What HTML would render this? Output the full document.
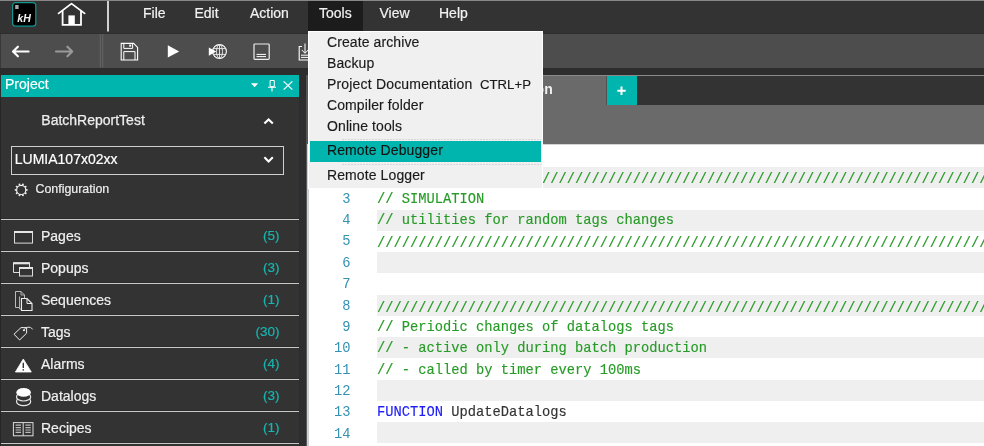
<!DOCTYPE html>
<html><head><meta charset="utf-8">
<style>
*{margin:0;padding:0;box-sizing:border-box}
html,body{width:984px;height:446px;overflow:hidden;background:#2d2d2d;will-change:transform;font-family:"Liberation Sans",sans-serif}
.a{position:absolute;white-space:nowrap}
.t{position:absolute;white-space:nowrap;line-height:1}
#top{left:0;top:0;width:984px;height:33px;background:#333;border-top:1px solid #888}
#tb{left:0;top:34px;width:984px;height:34px;background:#4d4d4d}
.mb{font-size:14px;color:#f2f2f2;-webkit-text-stroke:0.2px #f2f2f2}
#side{left:0;top:97px;width:299px;height:349px;background:#333}
#phd{left:1px;top:75px;width:298px;height:22px;background:#00b5ad}
.sep{position:absolute;left:1px;width:298px;height:2px;background:#c8c8c8;border-top:1px solid #2c2c2c}
.lbl{font-size:14px;color:#f0f0f0;-webkit-text-stroke:0.2px #f0f0f0}
.cnt{font-size:13.5px;color:#19b5ae;-webkit-text-stroke:0.2px #19b5ae}
#gut{left:300px;top:97px;width:6px;height:349px;background:#2e2e30}
#edge{left:306px;top:144px;width:3px;height:302px;background:linear-gradient(90deg,#5a5c5e 0 1px,#cdd0d3 1px 3px)}
#tabs{left:308px;top:75px;width:676px;height:30px;background:#333;border-top:1px solid #8a8a8a}
#tab1{left:308px;top:76px;width:298px;height:29px;background:#6a6a6a}
#plus{left:607px;top:76px;width:30px;height:29px;background:#00b5ad}
#hdr{left:308px;top:105px;width:676px;height:39px;background:#6a6a6a}
#ed{left:308px;top:144px;width:676px;height:302px;background:#fff}
.ln{position:absolute;left:308px;width:42.5px;padding-top:2px;text-align:right;font-family:"Liberation Mono",monospace;font-size:13.75px;color:#3592b2;line-height:21.25px;height:21.25px}
.cl{position:absolute;left:377px;width:607px;padding-top:2px;font-family:"Liberation Mono",monospace;font-size:13.75px;color:#279b27;-webkit-text-stroke-width:0.15px;line-height:21.25px;height:21.25px;overflow:hidden}
.ev{background:#efefef}
.sl{display:inline-block;transform:translateY(1.3px) scaleY(1.12);transform-origin:50% 9px}
#menu{left:308px;top:31px;width:235px;height:158px;background:#f0f0f0;border:1px solid #fff}
.mi{font-size:14px;letter-spacing:0.1px;color:#1a1a1a;-webkit-text-stroke:0.15px #1a1a1a}
.dsep{position:absolute;left:342px;width:199px;height:1px;background:repeating-linear-gradient(90deg,#d6d6d6 0 2px,transparent 2px 3px)}
</style></head><body>
<div class="a" id="top"></div>
<div class="a" style="left:308px;top:1px;width:55px;height:30px;background:#1c1c1c"></div>
<div class="a" id="tb"></div><div class="a" style="left:0;top:34px;width:1px;height:34px;background:#383838"></div>

<!-- menubar text -->
<div class="t mb" style="left:143px;top:5.8px">File</div>
<div class="t mb" style="left:194.5px;top:5.8px">Edit</div>
<div class="t mb" style="left:250px;top:5.8px">Action</div>
<div class="t mb" style="left:319px;top:5.8px">Tools</div>
<div class="t mb" style="left:379.5px;top:5.8px">View</div>
<div class="t mb" style="left:439px;top:5.8px">Help</div>

<!-- sidebar -->
<div class="a" id="side"></div>
<div class="a" id="phd"></div>
<div class="t" style="left:5px;top:77px;font-size:14px;color:#fff;-webkit-text-stroke:0.2px #fff">Project</div>
<div class="t" style="left:41.3px;top:113.3px;font-size:14px;color:#eee;-webkit-text-stroke:0.25px #eee">BatchReportTest</div>
<div class="a" style="left:11px;top:146px;width:273px;height:29px;border:1px solid #cfcfcf"></div>
<div class="t" style="left:14.8px;top:151.6px;font-size:14px;color:#fff;-webkit-text-stroke:0.2px #fff">LUMIA107x02xx</div>
<div class="t" style="left:35.5px;top:183px;font-size:12.4px;color:#eee;-webkit-text-stroke:0.2px #eee">Configuration</div>

<div class="sep" style="top:218px"></div>
<div class="sep" style="top:250px"></div>
<div class="sep" style="top:282px"></div>
<div class="sep" style="top:314px"></div>
<div class="sep" style="top:346px"></div>
<div class="sep" style="top:378px"></div>
<div class="sep" style="top:410px"></div>
<div class="sep" style="top:442px"></div>

<div class="t lbl" style="left:41px;top:228.9px">Pages</div>
<div class="t lbl" style="left:41px;top:260.9px">Popups</div>
<div class="t lbl" style="left:41px;top:292.9px">Sequences</div>
<div class="t lbl" style="left:41px;top:324.9px">Tags</div>
<div class="t lbl" style="left:41px;top:356.9px">Alarms</div>
<div class="t lbl" style="left:41px;top:388.9px">Datalogs</div>
<div class="t lbl" style="left:41px;top:420.9px">Recipes</div>

<div class="t cnt" style="right:704.6px;top:229.2px">(5)</div>
<div class="t cnt" style="right:704.6px;top:261.2px">(3)</div>
<div class="t cnt" style="right:704.6px;top:293.2px">(1)</div>
<div class="t cnt" style="right:704.6px;top:325.2px">(30)</div>
<div class="t cnt" style="right:704.6px;top:357.2px">(4)</div>
<div class="t cnt" style="right:704.6px;top:389.2px">(3)</div>
<div class="t cnt" style="right:704.6px;top:421.2px">(1)</div>

<div class="a" id="gut"></div><div class="a" style="left:0;top:97px;width:1px;height:349px;background:#262626"></div>

<!-- editor -->
<div class="a" id="tabs"></div>
<div class="a" id="tab1"></div>
<div class="t" style="right:431.3px;top:82px;font-size:14px;color:#f0f0f0;font-weight:bold">Simulation</div>
<div class="a" style="left:606px;top:76px;width:1px;height:29px;background:#505050"></div><div class="a" id="plus"></div>
<div class="a" id="hdr"></div>
<div class="a" id="ed"></div><div class="a" style="left:308px;top:144px;width:676px;height:1px;background:#d4d4d4"></div>
<div class="a" id="edge"></div><div class="a" style="left:306px;top:75px;width:2px;height:69px;background:#555"></div>

<div id="code">
<div class="cl ev" style="top:167.00px;padding-top:0.46px"><span class="sl">//////////////////////////////////////////////////////////////////////////////////</span></div>
<div class="ln" style="top:188.25px;padding-top:0.55px">3</div>
<div class="cl" style="top:188.25px;padding-top:0.55px">// SIMULATION</div>
<div class="ln" style="top:209.50px;padding-top:0.64px">4</div>
<div class="cl ev" style="top:209.50px;padding-top:0.64px">// utilities for random tags changes</div>
<div class="ln" style="top:230.75px;padding-top:0.73px">5</div>
<div class="cl" style="top:230.75px;padding-top:0.73px"><span class="sl">//////////////////////////////////////////////////////////////////////////////////</span></div>
<div class="ln" style="top:252.00px;padding-top:0.82px">6</div>
<div class="cl ev" style="top:252.00px;padding-top:0.82px"></div>
<div class="ln" style="top:273.25px;padding-top:0.91px">7</div>
<div class="cl" style="top:273.25px;padding-top:0.91px"></div>
<div class="ln" style="top:294.50px;padding-top:1.00px">8</div>
<div class="cl ev" style="top:294.50px;padding-top:1.00px"><span class="sl">//////////////////////////////////////////////////////////////////////////////////</span></div>
<div class="ln" style="top:315.75px;padding-top:1.09px">9</div>
<div class="cl" style="top:315.75px;padding-top:1.09px">// Periodic changes of datalogs tags</div>
<div class="ln" style="top:337.00px;padding-top:1.18px">10</div>
<div class="cl ev" style="top:337.00px;padding-top:1.18px">// - active only during batch production</div>
<div class="ln" style="top:358.25px;padding-top:1.27px">11</div>
<div class="cl" style="top:358.25px;padding-top:1.27px">// - called by timer every 100ms</div>
<div class="ln" style="top:379.50px;padding-top:1.36px">12</div>
<div class="cl ev" style="top:379.50px;padding-top:1.36px"></div>
<div class="ln" style="top:400.75px;padding-top:1.45px">13</div>
<div class="cl" style="top:400.75px;padding-top:1.45px"><span style="color:#1c1cf5">FUNCTION</span> <span style="color:#333">UpdateDatalogs</span></div>
<div class="ln" style="top:422.00px;padding-top:1.54px">14</div>
<div class="cl ev" style="top:422.00px;padding-top:1.54px"></div>
</div>

<!-- dropdown menu -->
<div class="a" id="menu"></div>
<div class="a" style="left:310px;top:141.4px;width:231px;height:20.6px;background:#00b5ad"></div>
<div class="dsep" style="top:139px"></div>
<div class="dsep" style="top:163.5px"></div>
<div class="t mi" style="left:327px;top:35.2px">Create archive</div>
<div class="t mi" style="left:327px;top:56.2px">Backup</div>
<div class="t mi" style="left:327px;top:77.2px;letter-spacing:0.18px">Project Documentation</div>
<div class="t mi" style="left:480px;top:77.6px;font-size:13.2px;letter-spacing:0">CTRL+P</div>
<div class="t mi" style="left:327px;top:98.2px">Compiler folder</div>
<div class="t mi" style="left:327px;top:119.2px">Online tools</div>
<div class="t mi" style="left:327px;top:143px;color:#111">Remote Debugger</div>
<div class="t mi" style="left:327px;top:168px">Remote Logger</div>

<!-- icons -->
<svg class="a" style="left:0;top:0" width="984" height="446" viewBox="0 0 984 446">
<!-- logo -->
<rect x="12.6" y="2.6" width="23.2" height="23.6" rx="3" fill="#000" stroke="#12968f" stroke-width="1.2"/>
<text x="17.3" y="21.9" font-family="Liberation Sans" font-size="10.6" font-weight="bold" font-style="italic" fill="#f4f4f4">kH</text>
<rect x="15.2" y="5" width="3.4" height="4" fill="#aaa"/>
<!-- home -->
<polyline points="58.6,13.4 71.5,3.6 84.6,13.4" fill="none" stroke="#fff" stroke-width="1.8" stroke-linecap="round" stroke-linejoin="round"/>
<path d="M62.6,10.6 V24.8 H81 V10.6" fill="none" stroke="#fff" stroke-width="1.8"/>
<rect x="68.4" y="15.4" width="6.4" height="9.6" fill="#fff"/>
<rect x="107" y="1" width="2" height="30.5" fill="#d0d0d0"/>
<!-- toolbar sep -->
<rect x="99.7" y="34" width="1.2" height="33.5" fill="#626262"/>
<rect x="102.1" y="34" width="1.2" height="33.5" fill="#626262"/>
<!-- back arrow -->
<path d="M28.6,51.5 H13.2 M17.9,46.7 L13,51.5 L17.9,56.3" fill="none" stroke="#fff" stroke-width="2.1" stroke-linecap="round" stroke-linejoin="round"/>
<!-- fwd arrow -->
<path d="M56,51.5 H72 M67.4,46.7 L72.2,51.5 L67.4,56.3" fill="none" stroke="#9a9a9a" stroke-width="2.1" stroke-linecap="round" stroke-linejoin="round"/>
<!-- save -->
<path d="M121.2,43.4 H133.6 L137.6,47.4 V60 H121.2 Z" fill="none" stroke="#fff" stroke-width="1.1"/>
<path d="M123.8,43.4 V48.4 H132.6 V43.4" fill="none" stroke="#fff" stroke-width="1"/>
<rect x="129.2" y="44.6" width="2" height="2" fill="#fff"/>
<path d="M123.8,60 V51.6 H135 V60" fill="none" stroke="#fff" stroke-width="1"/>
<!-- play -->
<path d="M167.8,45.3 L179.2,51.4 L167.8,57.5 Z" fill="#fff"/>
<!-- globe play -->
<circle cx="219.5" cy="51.5" r="6.9" fill="none" stroke="#fff" stroke-width="1.1"/>
<ellipse cx="219.5" cy="51.5" rx="3" ry="6.9" fill="none" stroke="#eee" stroke-width="0.9"/>
<path d="M219.5,44.6 V58.4 M213.2,48.6 H225.8 M213.2,54.4 H225.8" stroke="#eee" stroke-width="0.9"/>
<path d="M208.8,47.4 L216.3,51.6 L208.8,55.7 Z" fill="#fff"/>
<!-- rect icon -->
<rect x="254" y="44" width="15.2" height="15.4" rx="0.8" fill="none" stroke="#eee" stroke-width="1.2"/>
<path d="M256.5,54.4 H266 M256.5,56.6 H266" stroke="#fff" stroke-width="1"/>
<!-- download icon -->
<path d="M305,43.5 V53 M301.8,50 L305,53.3 L308.2,50" fill="none" stroke="#fff" stroke-width="1"/>
<path d="M302,46.5 H299.2 V60 H310" fill="none" stroke="#fff" stroke-width="1.1"/>
<path d="M301,55.2 H310 M301,57.4 H310" stroke="#fff" stroke-width="1"/>
<!-- panel header icons -->
<path d="M251,83.2 H258.2 L254.6,87.2 Z" fill="#fff"/>
<path d="M270.1,80.5 H274.3 V86.6 H270.1 Z" fill="none" stroke="#fff" stroke-width="1"/>
<path d="M268,87.2 H276 M272,87.2 V91.4" stroke="#fff" stroke-width="1.1"/>
<path d="M283.6,81.4 L292.4,89.6 M292.4,81.4 L283.6,89.6" stroke="#fff" stroke-width="1.2"/>
<!-- chevrons -->
<path d="M264.4,123.6 L268.6,119.4 L272.8,123.6" fill="none" stroke="#fff" stroke-width="2.1"/>
<path d="M264.4,157.2 L268.6,161.4 L272.8,157.2" fill="none" stroke="#fff" stroke-width="2.1"/>
<!-- gear -->
<g transform="translate(21.2,189.9)"><circle r="4.6" fill="none" stroke="#f0f0f0" stroke-width="1.2"/><circle cx="5.60" cy="-0.00" r="0.95" fill="#f0f0f0"/><circle cx="4.53" cy="-3.29" r="0.95" fill="#f0f0f0"/><circle cx="1.73" cy="-5.33" r="0.95" fill="#f0f0f0"/><circle cx="-1.73" cy="-5.33" r="0.95" fill="#f0f0f0"/><circle cx="-4.53" cy="-3.29" r="0.95" fill="#f0f0f0"/><circle cx="-5.60" cy="-0.00" r="0.95" fill="#f0f0f0"/><circle cx="-4.53" cy="3.29" r="0.95" fill="#f0f0f0"/><circle cx="-1.73" cy="5.33" r="0.95" fill="#f0f0f0"/><circle cx="1.73" cy="5.33" r="0.95" fill="#f0f0f0"/><circle cx="4.53" cy="3.29" r="0.95" fill="#f0f0f0"/></g>
<!-- pages icon -->
<rect x="14.5" y="231.5" width="18" height="11.6" fill="none" stroke="#ddd" stroke-width="1"/>
<rect x="14" y="231" width="19" height="2" fill="#e6e6e6"/>
<!-- popups icon -->
<path d="M19,272.5 H13.5 V262.8 H29.5 V267" fill="none" stroke="#ddd" stroke-width="1"/>
<rect x="13" y="262.3" width="17" height="2" fill="#e6e6e6"/>
<rect x="19.5" y="267.5" width="13" height="8.5" fill="none" stroke="#ddd" stroke-width="1"/>
<rect x="19" y="267" width="14" height="2" fill="#e6e6e6"/>
<!-- sequences icon -->
<path d="M19,307.5 H15.5 V291.5 H21 L24.5,295 V298" fill="none" stroke="#bbb" stroke-width="1"/>
<path d="M21,291.5 V295 H24.5" fill="none" stroke="#bbb" stroke-width="0.9"/>
<path d="M19.6,296.5 V309 H21" fill="none" stroke="#bbb" stroke-width="1"/>
<path d="M21.5,310.5 V298.5 H27 L32,303.5 V310.5 Z" fill="none" stroke="#eee" stroke-width="1.1"/>
<path d="M27,298.5 V303.5 H32" fill="none" stroke="#eee" stroke-width="1"/>
<!-- tags icon -->
<path d="M14,334.2 L21,327.6 L26.6,327.6 L26.6,333.2 L19.6,340 Z" fill="none" stroke="#eee" stroke-width="1"/>
<circle cx="24" cy="330.2" r="1" fill="#eee"/>
<path d="M23.4,330.4 C25.5,327.2 30,325.6 32.7,329.4" fill="none" stroke="#eee" stroke-width="1"/>
<!-- alarms -->
<path d="M23.3,359 L31.3,372 H15.4 Z" fill="#fff" stroke="#fff" stroke-width="0.8" stroke-linejoin="round"/>
<path d="M23.3,362.8 V368" stroke="#333" stroke-width="1.4"/>
<rect x="22.6" y="369.2" width="1.4" height="1.4" fill="#333"/>
<!-- datalogs -->
<ellipse cx="23.6" cy="401.5" rx="7.1" ry="4.1" fill="#333" stroke="#e8e8e8" stroke-width="1.2"/>
<ellipse cx="23.6" cy="396.9" rx="7.1" ry="4.1" fill="#333" stroke="#e8e8e8" stroke-width="1.2"/>
<ellipse cx="23.6" cy="392.4" rx="7.3" ry="4.4" fill="#fff"/>
<!-- recipes -->
<rect x="13.4" y="422.6" width="19.6" height="13.2" fill="none" stroke="#ddd" stroke-width="1"/>
<path d="M23.2,422.6 V435.8" stroke="#ddd" stroke-width="1"/>
<path d="M15.6,425.2 H21 M15.6,427.6 H21 M15.6,430 H21 M15.6,432.4 H21 M25.4,425.2 H30.8 M25.4,427.6 H30.8 M25.4,430 H30.8 M25.4,432.4 H30.8" stroke="#bbb" stroke-width="1.2"/>
<!-- plus -->
<path d="M621.5,86.6 V95 M617.3,90.8 H625.7" stroke="#fff" stroke-width="2"/>
</svg>
</body></html>
